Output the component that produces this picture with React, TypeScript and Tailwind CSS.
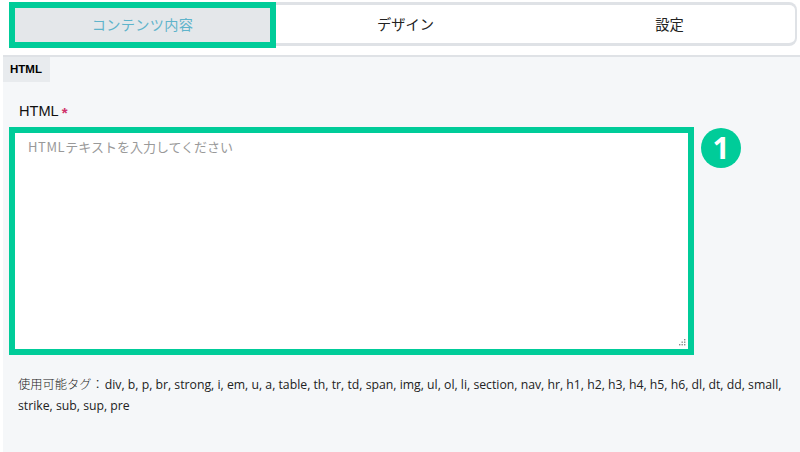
const tabFont = { fontFamily: '"Noto Sans CJK JP", sans-serif' };

const TAGS =
  'div, b, p, br, strong, i, em, u, a, table, th, tr, td, span, img, ul, ol, li, section, nav, hr, h1, h2, h3, h4, h5, h6, dl, dt, dd, small, strike, sub, sup, pre';

export default function App() {
  return (
    <div
      className="flex h-[452px] w-[800px] flex-col overflow-hidden bg-white pl-[3px]"
      style={{ fontFamily: '"Open Sans", "Noto Sans CJK JP", sans-serif' }}
    >
      {/* タブ */}
      <div className="relative ml-[6px] mt-[2px] flex h-[44px] w-[788px]">
        <div className="z-10 flex h-[46px] w-[267px] shrink-0 items-center justify-center border-[6px] border-[#00cc99] bg-[#e4e7ea] text-[14.2px] tracking-[0.3px] text-[#5fb4cb]" style={tabFont}>
          コンテンツ内容
        </div>
        <div className="-ml-[2px] flex h-[44px] flex-1 rounded-r-[8px] border-y-[3px] border-r-[2px] border-[#dfe2e6] bg-white text-[14.3px] text-[#222]" style={tabFont}>
          <div className="flex w-[263px] items-center justify-center">デザイン</div>
          <div className="flex flex-1 items-center justify-center pl-[7px]">設定</div>
        </div>
      </div>

      <div className="mt-[9px] flex-1 border-t-[2px] border-[#dfe2e6] bg-[#f5f7f9]">
        <div className="flex h-[25px] w-[47px] items-center justify-center bg-[#e8ebee] pr-[1px] text-[11.5px] font-bold text-black" style={{ fontFamily: '"Liberation Sans", sans-serif' }}>
          HTML
        </div>

        <div className="ml-[16px] mt-[18px] flex h-[22px] items-center text-[14.6px] leading-[22px] text-[#111]" style={{ fontFamily: '"Liberation Sans", sans-serif' }}>
          HTML<span className="ml-[3px] mt-[3px] h-[16px] text-[15px] font-bold leading-[16px] text-[#d0336c]">*</span>
        </div>

        <div className="mt-[5px] flex items-start">
          <div className="relative ml-[6px] h-[228px] w-[685px] border-[6px] border-[#00cc99] bg-white px-[13px] py-[4px] text-[13px] text-[#999]" style={tabFont}>
            <span className="tracking-[0.6px]">HTML</span>テキストを入力してください
            <svg className="absolute bottom-[2px] right-[2px]" width="9" height="9" viewBox="0 0 9 9" fill="#8a8a8a">
              <rect x="7" y="1" width="1.4" height="1.4" />
              <rect x="4.5" y="3.5" width="1.4" height="1.4" />
              <rect x="7" y="3.5" width="1.4" height="1.4" />
              <rect x="2" y="6" width="1.4" height="1.4" />
              <rect x="4.5" y="6" width="1.4" height="1.4" />
              <rect x="7" y="6" width="1.4" height="1.4" />
            </svg>
          </div>
          <div className="ml-[7px] mt-[1px] flex h-10 w-10 items-center justify-center rounded-full bg-[#00cc99] text-[30px] font-bold leading-none text-white" style={{ fontFamily: '"Open Sans", sans-serif' }}>
            1
          </div>
        </div>

        <p className="ml-[15px] mt-[19px] w-[775px] text-[12.25px] leading-[21px] text-[#222]">
          <span className="mr-[1px] font-light">使用可能タグ：</span>{TAGS}
        </p>
      </div>
    </div>
  );
}
